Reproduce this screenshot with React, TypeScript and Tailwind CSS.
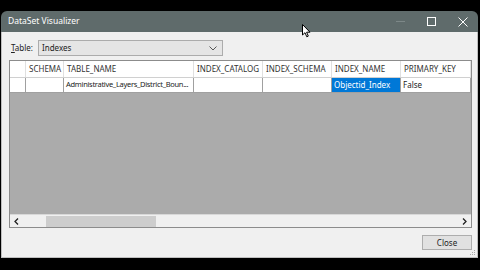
import { FC } from 'react';

const font = { fontFamily: '"Noto Sans", "Liberation Sans", Arial, sans-serif' };

const columns = [
    { name: '', w: 'w-[16px]' },
    { name: 'SCHEMA', w: 'w-[38px]' },
    { name: 'TABLE_NAME', w: 'w-[130px]' },
    { name: 'INDEX_CATALOG', w: 'w-[69px]' },
    { name: 'INDEX_SCHEMA', w: 'w-[69px]' },
    { name: 'INDEX_NAME', w: 'w-[69px]' },
    { name: 'PRIMARY_KEY', w: 'w-[70px]' },
];

const row = ['', '', 'Administrative_Layers_District_Boun...', '', '', 'Objectid_Index', 'False'];

const TitleBar: FC = () => (
    <div className="h-[21px] bg-[#5f6b6b] rounded-t-[6px] flex items-center pl-[7px] relative">
        <span className="text-[8.5px] text-white leading-none">DataSet Visualizer</span>
        <div className="ml-auto flex items-center h-full">
            <div className="w-[32px] h-full flex items-center justify-center">
                <div className="w-[9px] h-px bg-[#7d8888]" />
            </div>
            <div className="w-[31px] h-full flex items-center justify-center">
                <div className="w-[9px] h-[9px] border border-white" />
            </div>
            <div className="w-[31px] h-full flex items-center justify-center">
                <svg width="10" height="10" viewBox="0 0 10 10">
                    <path d="M0.5 0.5 L9.5 9.5 M9.5 0.5 L0.5 9.5" stroke="white" strokeWidth="1" />
                </svg>
            </div>
        </div>
    </div>
);

const Grid: FC = () => (
    <div className="mt-[4px] h-[168px] border border-[#8c8c8c] bg-[#ababab] flex flex-col">
        <div className="flex h-[17px] bg-white border-b border-[#d0d0d0]">
            {columns.map((c, i) => (
                <div key={i} className={`${c.w} shrink-0 border-r border-[#e0e0e0] pl-[3px] flex items-center text-[8px] text-[#333] leading-none whitespace-nowrap overflow-hidden`}>
                    {c.name}
                </div>
            ))}
        </div>
        <div className="flex h-[15px] bg-white">
            {row.map((v, i) => (
                <div key={i} className={`${columns[i].w} shrink-0 border-r border-b border-[#a0a0a0] flex items-center leading-none whitespace-nowrap overflow-hidden ${i === 2 ? 'text-[7.5px] tracking-[-0.3px]' : 'text-[8px]'} ${i === 5 ? 'bg-[#0078d7] text-white pl-[2px]' : 'text-[#222] pl-[2px]'}`}>
                    {v}
                </div>
            ))}
        </div>
        <div className="flex-1" />
        <div className="h-[13px] bg-[#f0f0f0] border-t border-[#d8d8d8] flex items-center">
            <div className="w-[36px] h-full flex items-center pl-[4px]">
                <svg width="5" height="7" viewBox="0 0 5 7">
                    <path d="M4 0.5 L1 3.5 L4 6.5" stroke="#222" strokeWidth="1.3" fill="none" />
                </svg>
            </div>
            <div className="w-[110px] h-[11px] bg-[#cdcdcd]" />
            <div className="flex-1" />
            <div className="w-[14px] h-full flex items-center justify-center">
                <svg width="5" height="7" viewBox="0 0 5 7">
                    <path d="M1 0.5 L4 3.5 L1 6.5" stroke="#222" strokeWidth="1.3" fill="none" />
                </svg>
            </div>
        </div>
    </div>
);

export default function App() {
    return (
        <div className="w-[480px] h-[270px] bg-black overflow-hidden relative" style={font}>
            <div className="absolute left-[1px] top-[11px] w-[477px] h-[247px] flex flex-col">
                <TitleBar />
                <div className="flex-1 bg-[#f0f0f0] border-x border-b border-[#bfbfbf] pl-[7px] pr-[5px] pt-[8px] flex flex-col relative">
                    <div className="flex items-center h-[16px]">
                        <span className="text-[8px] text-[#222] w-[29px] pl-[2px]"><span className="underline">T</span>able:</span>
                        <div className="w-[185px] h-[16px] bg-[#e5e5e5] border border-[#acacac] flex items-center pl-[3px]">
                            <span className="text-[8px] text-[#222]">Indexes</span>
                            <svg className="ml-auto mr-[5px]" width="8" height="5" viewBox="0 0 8 5">
                                <path d="M0.5 0.5 L4 4 L7.5 0.5" stroke="#555" strokeWidth="1" fill="none" />
                            </svg>
                        </div>
                    </div>
                    <Grid />
                    <div className="flex justify-end mt-[7px]">
                        <div className="w-[50px] h-[15px] bg-[#e1e1e1] border border-[#adadad] flex items-center justify-center text-[8px] text-[#222]">
                            Close
                        </div>
                    </div>
                    <svg className="absolute right-[1px] bottom-[1px]" width="6" height="6" viewBox="0 0 6 6">
                        <rect x="4" y="0" width="1" height="1" fill="#aaa" />
                        <rect x="2" y="2" width="1" height="1" fill="#aaa" />
                        <rect x="4" y="2" width="1" height="1" fill="#aaa" />
                        <rect x="0" y="4" width="1" height="1" fill="#aaa" />
                        <rect x="2" y="4" width="1" height="1" fill="#aaa" />
                        <rect x="4" y="4" width="1" height="1" fill="#aaa" />
                    </svg>
                </div>
            </div>
            <svg className="absolute left-[302px] top-[24px]" width="9" height="14" viewBox="0 0 9 14">
                <path d="M0.5 0.5 L0.5 11 L3 8.7 L4.8 12.8 L6.3 12.1 L4.6 8.2 L8 8.2 Z" fill="white" stroke="black" strokeWidth="1" strokeLinejoin="round" />
            </svg>
        </div>
    );
}
